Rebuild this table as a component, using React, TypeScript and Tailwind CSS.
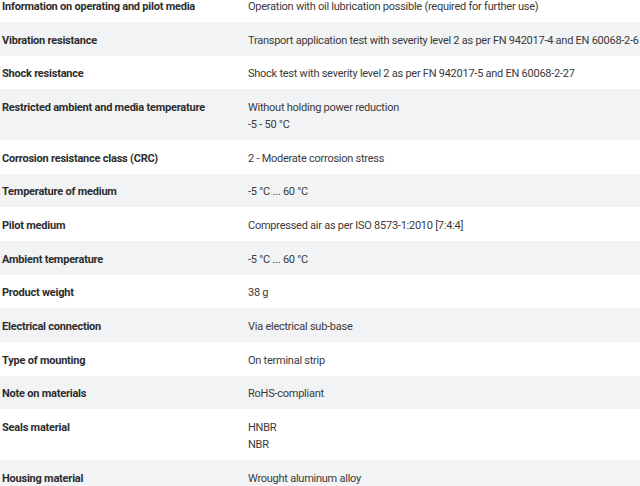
import React from "react";

type Row = { label: string; values: string[] };

const rows: Row[] = [
  { label: "Information on operating and pilot media", values: ["Operation with oil lubrication possible (required for further use)"] },
  { label: "Vibration resistance", values: ["Transport application test with severity level 2 as per FN 942017-4 and EN 60068-2-6"] },
  { label: "Shock resistance", values: ["Shock test with severity level 2 as per FN 942017-5 and EN 60068-2-27"] },
  { label: "Restricted ambient and media temperature", values: ["Without holding power reduction", "-5 - 50 °C"] },
  { label: "Corrosion resistance class (CRC)", values: ["2 - Moderate corrosion stress"] },
  { label: "Temperature of medium", values: ["-5 °C ... 60 °C"] },
  { label: "Pilot medium", values: ["Compressed air as per ISO 8573-1:2010 [7:4:4]"] },
  { label: "Ambient temperature", values: ["-5 °C ... 60 °C"] },
  { label: "Product weight", values: ["38 g"] },
  { label: "Electrical connection", values: ["Via electrical sub-base"] },
  { label: "Type of mounting", values: ["On terminal strip"] },
  { label: "Note on materials", values: ["RoHS-compliant"] },
  { label: "Seals material", values: ["HNBR", "NBR"] },
  { label: "Housing material", values: ["Wrought aluminum alloy"] },
];

export default function App() {
  return (
    <div className="h-[486px] w-[640px] overflow-hidden bg-white text-[#333] font-['Roboto',sans-serif] text-[11px] leading-[17px]">
      <div className="-mt-[11.5px]">
        {rows.map((r, i) => (
          <div
            key={r.label}
            className={`flex pt-[9.5px] pb-[7.17px] ${i % 2 === 1 ? "bg-[#f2f3f4]" : "bg-white"}`}
          >
            <div className="w-[248px] shrink-0 pl-[2px] font-bold tracking-[-0.22px] text-[#2d2d2d] whitespace-nowrap">
              {r.label}
            </div>
            <div className="flex-1 min-w-0 flex flex-col tracking-[-0.25px] text-[#3a3a3a] whitespace-nowrap overflow-hidden">
              {r.values.map((v) => (
                <span key={v}>{v}</span>
              ))}
            </div>
          </div>
        ))}
      </div>
    </div>
  );
}
